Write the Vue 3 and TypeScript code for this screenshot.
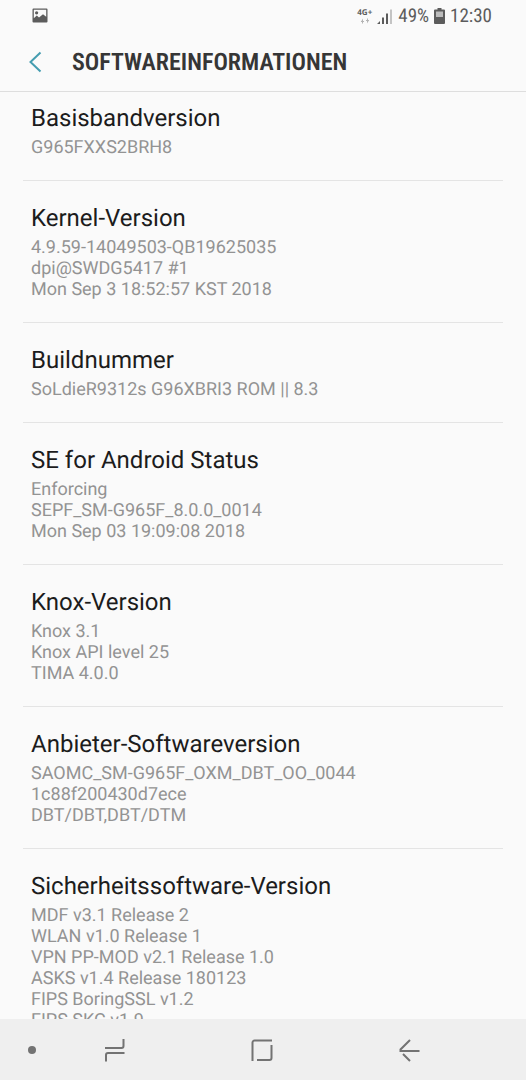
<script setup lang="ts">
interface InfoEntry {
  title: string
  lines: string[]
}

const entries: InfoEntry[] = [
  { title: 'Basisbandversion', lines: ['G965FXXS2BRH8'] },
  {
    title: 'Kernel-Version',
    lines: ['4.9.59-14049503-QB19625035', 'dpi@SWDG5417 #1', 'Mon Sep 3 18:52:57 KST 2018'],
  },
  { title: 'Buildnummer', lines: ['SoLdieR9312s G96XBRI3 ROM || 8.3'] },
  {
    title: 'SE for Android Status',
    lines: ['Enforcing', 'SEPF_SM-G965F_8.0.0_0014', 'Mon Sep 03 19:09:08 2018'],
  },
  { title: 'Knox-Version', lines: ['Knox 3.1', 'Knox API level 25', 'TIMA 4.0.0'] },
  {
    title: 'Anbieter-Softwareversion',
    lines: ['SAOMC_SM-G965F_OXM_DBT_OO_0044', '1c88f200430d7ece', 'DBT/DBT,DBT/DTM'],
  },
  {
    title: 'Sicherheitssoftware-Version',
    lines: [
      'MDF v3.1 Release 2',
      'WLAN v1.0 Release 1',
      'VPN PP-MOD v2.1 Release 1.0',
      'ASKS v1.4 Release 180123',
      'FIPS BoringSSL v1.2',
      'FIPS SKC v1.9',
    ],
  },
]
</script>

<template>
  <div class="screen">
    <div class="status">
      <svg class="picture" width="16" height="16" viewBox="0 0 16 16" aria-hidden="true">
        <path
          fill="#5c5c5c"
          fill-rule="evenodd"
          d="M1.5 0.5h13a1 1 0 0 1 1 1v12a1 1 0 0 1-1 1h-13a1 1 0 0 1-1-1v-12a1 1 0 0 1 1-1zM1.8 1.8v8.4l3-2.6 2.2 2 4-3.4 3.2 2.6V1.8z"
        />
        <circle cx="4.6" cy="4.8" r="1.6" fill="#5c5c5c" />
      </svg>
      <div class="indicators">
        <div class="network">
          <span>4G+</span>
          <svg width="10" height="6" viewBox="0 0 10 6" aria-hidden="true">
            <path fill="#b4b4b4" d="M3 0.5v5H2V4H0.8zM7 5.5v-5h1v1.6h1.2z" />
            <path fill="none" stroke="#b4b4b4" d="M1 3.5h3M6 2.5h3" />
          </svg>
        </div>
        <svg class="signal" width="15" height="15" viewBox="0 0 15 15" aria-hidden="true">
          <path fill="#5c5c5c" d="M0 15l3-3v3zM5 8.5h2V15H5zM9 4.5h2V15H9z" />
          <path fill="#c4c4c4" d="M13 0.5h2V15h-2z" />
        </svg>
        <span class="percent">49%</span>
        <svg class="battery" width="11" height="16" viewBox="0 0 11 16" aria-hidden="true">
          <path fill="#5c5c5c" d="M3.5 0h4v1.5H10a1 1 0 0 1 1 1V15a1 1 0 0 1-1 1H1a1 1 0 0 1-1-1V2.5a1 1 0 0 1 1-1h2.5z" />
          <path fill="#bcbcbc" d="M2 3.5h7V9H2z" />
        </svg>
        <span class="clock">12:30</span>
      </div>
    </div>

    <header class="header">
      <button class="back" type="button" aria-label="Zurück">
        <svg width="14" height="22" viewBox="0 0 14 22" aria-hidden="true">
          <path d="M12.5 1.5L2.5 11l10 9.5" fill="none" stroke="#459db0" stroke-width="2" />
        </svg>
      </button>
      <h1>SOFTWAREINFORMATIONEN</h1>
    </header>

    <main class="list">
      <section v-for="entry in entries" :key="entry.title" class="entry">
        <h2>{{ entry.title }}</h2>
        <p v-for="line in entry.lines" :key="line">{{ line }}</p>
      </section>
    </main>

    <nav class="navigation">
      <button type="button" aria-label="Leiste fixieren">
        <svg width="8" height="8" viewBox="0 0 8 8" aria-hidden="true">
          <circle cx="4" cy="4" r="4" fill="#737373" />
        </svg>
      </button>
      <button type="button" aria-label="Letzte Apps">
        <svg width="22" height="24" viewBox="0 0 22 24" aria-hidden="true">
          <path d="M1 10h16.5a2 2 0 0 0 2-2V1M20.5 15H4a2 2 0 0 0-2 2v6.5" />
        </svg>
      </button>
      <button type="button" aria-label="Startseite">
        <svg width="22" height="24" viewBox="0 0 22 24" aria-hidden="true">
          <path d="M1.5 23V4.5a2 2 0 0 1 2-2H21M20.5 7V20a2 2 0 0 1-2 2H6" />
        </svg>
      </button>
      <button type="button" aria-label="Zurück">
        <svg width="22" height="24" viewBox="0 0 22 24" aria-hidden="true">
          <path d="M12 2L2.5 11.5V13H21.5M5 16l7 7" />
        </svg>
      </button>
    </nav>
  </div>
</template>

<style>
body {
  margin: 0;
  background: #fafafa;
}
</style>

<style scoped>
.screen {
  display: flex;
  flex-direction: column;
  height: 100vh;
  background: #fafafa;
  color: #1c1c1c;
  font-family: Roboto, "Noto Sans", sans-serif;
  text-rendering: geometricPrecision;
}

.status {
  display: flex;
  flex: none;
  align-items: center;
  justify-content: space-between;
  height: 32px;
  padding: 0 34px 0 32px;
  color: #5c5c5c;
}

.indicators {
  display: flex;
  align-items: center;
  font-family: "Roboto Condensed", "Liberation Sans Narrow", Roboto, sans-serif;
  font-size: 19px;
  line-height: 20px;
}

.network {
  display: flex;
  flex-direction: column;
  align-items: center;
  gap: 1px;
  margin-right: 5px;
  font-family: "Open Sans", sans-serif;
  font-size: 8px;
  font-weight: 700;
  line-height: 8px;
}

.signal {
  margin-right: 6px;
}

.battery {
  margin: 0 5px;
}

.header {
  display: flex;
  flex: none;
  align-items: center;
  height: 59px;
  padding: 0 16px;
  border-bottom: 1px solid #dedede;
}

button {
  display: flex;
  align-items: center;
  justify-content: center;
  margin: 0;
  padding: 0;
  border: 0;
  background: none;
  cursor: pointer;
}

.back {
  width: 38px;
  height: 44px;
  margin-right: 18px;
}

h1 {
  margin: 0;
  color: #363636;
  font-family: "Roboto Condensed", "Liberation Sans Narrow", Roboto, sans-serif;
  font-size: 24px;
  font-weight: 600;
  line-height: 28px;
}

.list {
  flex: 1;
  min-height: 0;
  padding: 0 23px;
  overflow-y: auto;
  scrollbar-width: none;
}

.entry {
  padding: 23px 8px 22px;
  border-bottom: 1px solid #e4e4e4;
}

.entry:first-child {
  padding-top: 12px;
}

h2 {
  margin: 0 0 5px;
  font-size: 24px;
  font-weight: 400;
  line-height: 28px;
}

p {
  margin: 0;
  color: #939393;
  font-size: 18px;
  line-height: 21px;
}

.navigation {
  display: grid;
  flex: none;
  grid-template-columns: 64fr 102fr 192fr 102fr 66fr;
  height: 61px;
  background: #efefef;
}

.navigation path {
  fill: none;
  stroke: #737373;
  stroke-width: 2;
}
</style>
